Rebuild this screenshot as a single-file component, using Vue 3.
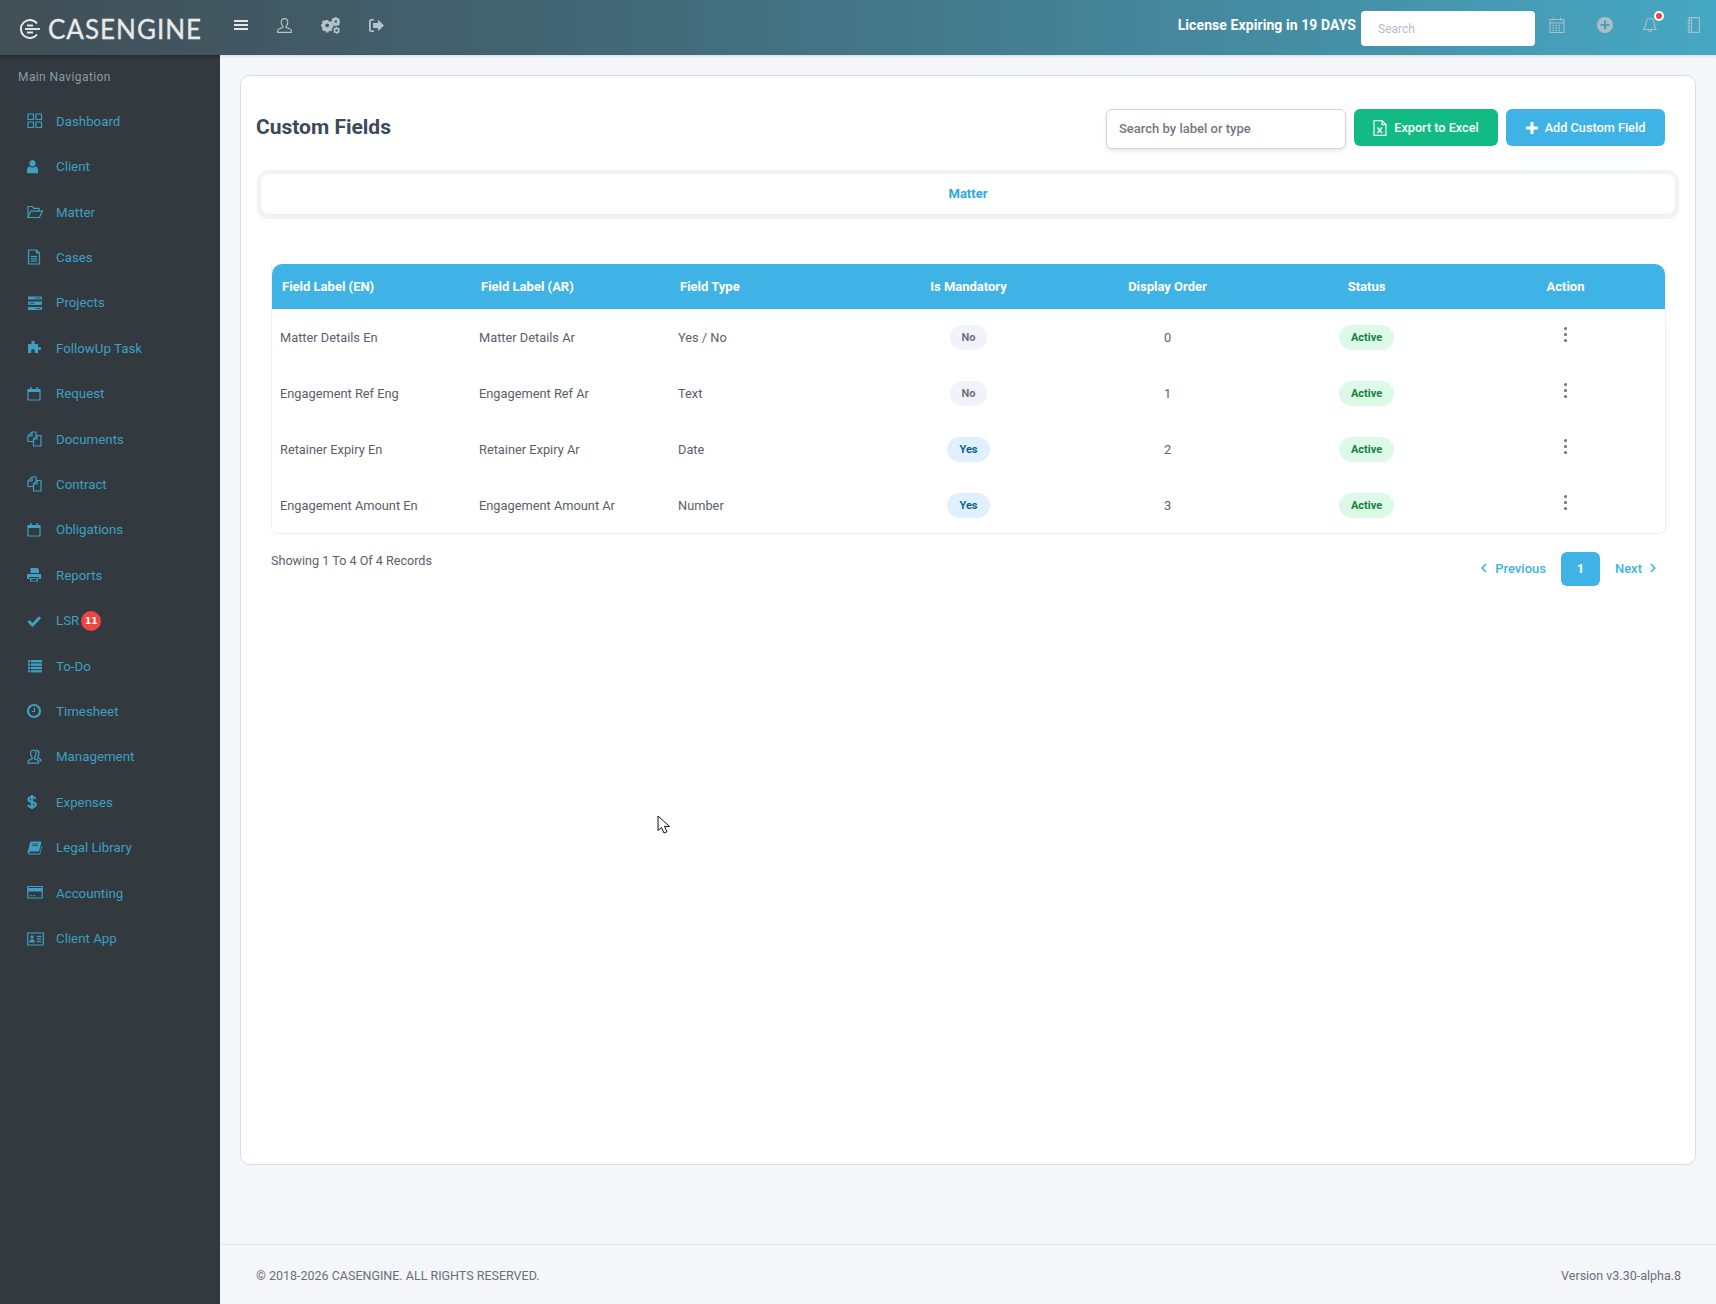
<script setup>
const icons = {
  dashboard: { s: ['M1 1h5.5v5.5H1z', 'M9 1h5.5v5.5H9z', 'M1 9h5.5v5.5H1z', 'M9 9h5.5v5.5H9z'] },
  user: { f: ['M5.5 1C7.3 1 8.6 2.4 8.6 4.2S7.3 7.6 5.5 7.6 2.4 6 2.4 4.2 3.7 1 5.5 1z', 'M2.6 7.6c1.600 1.200 4.200 1.200 5.800 0 1.600.3 2.600 1.400 2.600 3.200v3.400H0v-3.400c0-1.800 1-2.900 2.600-3.200z'] },
  folder: { s: ['M1 13.5V2.5h4.200l1.500 1.800h5.400v2.800', 'M1 13.5h11.400l3-6.400H3.800z'] },
  file: { s: ['M1.5 1h8l3 3v11h-11z', 'M9.5 1v3h3', 'M3.8 7.5h6.400', 'M3.8 9.8h6.400', 'M3.8 12h6.400'] },
  tasks: { f: ['M1 1.5h14v3H1z', 'M1 6.5h14v3.400H1z', 'M1 12h14v3H1z'], k: ['M8.5 2.7h5v.8h-5z', 'M2.5 7.8h5v.8h-5z', 'M8.5 13.2h5v.8h-5z'] },
  puzzle: { f: ['M4.5 1h3v3H11v3.200h3v2.600h-3V13H7.8v-2a1.800 1.800 0 0 0-3.600 0v2H1V4h3.500z'] },
  calendar: { s: ['M1 3.5h12v10.500H1z'], f: ['M1 3h12v3H1z', 'M3 1h1.600v3H3z', 'M9.4 1H11v3H9.4z'] },
  files: { s: ['M6.5 10.5H1V5l4-4h4v3.500', 'M5 1v4H1', 'M6.5 15V8L10 4.5h4V15z', 'M10 4.5V8H6.5'] },
  print: { f: ['M3.5 1h7l1.500 1.700V6H3.500z', 'M0 7h14v5h-2.200V10H2.200v2H0z', 'M3 11h8v3.500H3z'], k: ['M4.2 11.8h5.600v1.900H4.200z'] },
  check: { s3: ['M1.5 8l4 4L13 4.2'] },
  list: { f: ['M1 2h2.200v2.400H1z', 'M4 2h11v2.400H4z', 'M1 5.4h2.200v2.400H1z', 'M4 5.4h11v2.400H4z', 'M1 8.8h2.200v2.400H1z', 'M4 8.8h11v2.400H4z', 'M1 12.2h2.200v2.200H1z', 'M4 12.2h11v2.200H4z'] },
  clock: { s2: ['M7 2a6 6 0 1 0 0 12A6 6 0 0 0 7 2z'], s: ['M7.5 4.5v4H4.8'] },
  people: { s: ['M6.5 1C4.5 1 3.5 2.6 3.5 4.6c0 1.600.7 2.900 1.600 3.800v1.400C3 10.400 1 11 1 12.400v1.800h10.500v-1.800c0-1.400-2-2-4.100-2.600V8.400c1-.9 1.600-2.200 1.600-3.800C9 2.600 8 1 6.500 1z', 'M9 1.2c1.800.1 3 1.500 3 3.400 0 1.300-.4 2.400-1.200 3.300v1.300c1.800.5 3.200 1 3.200 2.400v.4h-2'] },
  dollar: { s2: ['M8.5 4.8C8 3.6 6.8 3 5 3 3 3 1.5 3.9 1.5 5.5 1.5 9 8.7 7 8.7 10.500 8.700 12.100 7 13 5 13c-2 0-3.400-.8-3.900-2.200', 'M5 1v14'] },
  book: { f: ['M3.5 1.5h11L12 11.600H2.800c-.9 0-1 1.800 0 1.800h9.800l1.800-7.400.7.500-2 8H2.500C.9 14.500.4 13 .7 11.500z'], k: ['M5.5 3.6h6v.7h-6z', 'M5 5.4h6v.7H5z'] },
  card: { s: ['M.8 1.5h14.400v11.500H.8z'], f: ['M.8 3h14.400v3.500H.8z', 'M2.5 10.300h2.500v.9H2.500z', 'M5.800 10.300h2.500v.9H5.800z'] },
  idcard: { s: ['M.7 2h15.600v12H.7z', 'M9.800 5.500h4.500', 'M9.800 8h4.500', 'M9.800 10.500h4.500'], f: ['M5 4.300a1.500 1.500 0 1 1 0 3.300 1.500 1.500 0 0 1 0-3.300z', 'M2.300 11.500c0-2 1.200-3.200 2.700-3.200s2.700 1.200 2.700 3.200z'] },
}

const navItems = [
  { label: 'Dashboard', icon: 'dashboard' },
  { label: 'Client', icon: 'user' },
  { label: 'Matter', icon: 'folder' },
  { label: 'Cases', icon: 'file' },
  { label: 'Projects', icon: 'tasks' },
  { label: 'FollowUp Task', icon: 'puzzle' },
  { label: 'Request', icon: 'calendar' },
  { label: 'Documents', icon: 'files' },
  { label: 'Contract', icon: 'files' },
  { label: 'Obligations', icon: 'calendar' },
  { label: 'Reports', icon: 'print' },
  { label: 'LSR', icon: 'check', badge: 11 },
  { label: 'To-Do', icon: 'list' },
  { label: 'Timesheet', icon: 'clock' },
  { label: 'Management', icon: 'people' },
  { label: 'Expenses', icon: 'dollar' },
  { label: 'Legal Library', icon: 'book' },
  { label: 'Accounting', icon: 'card' },
  { label: 'Client App', icon: 'idcard' },
]

const columns = ['Field Label (EN)', 'Field Label (AR)', 'Field Type', 'Is Mandatory', 'Display Order', 'Status', 'Action']

const rows = [
  { en: 'Matter Details En', ar: 'Matter Details Ar', type: 'Yes / No', mandatory: 'No', order: 0 },
  { en: 'Engagement Ref Eng', ar: 'Engagement Ref Ar', type: 'Text', mandatory: 'No', order: 1 },
  { en: 'Retainer Expiry En', ar: 'Retainer Expiry Ar', type: 'Date', mandatory: 'Yes', order: 2 },
  { en: 'Engagement Amount En', ar: 'Engagement Amount Ar', type: 'Number', mandatory: 'Yes', order: 3 },
]
</script>

<template>
  <div class="page">
    <header class="topbar">
      <div class="brand">
        <svg class="brand-mark" viewBox="0 0 20 20" width="20" height="20" fill="none" stroke="#e8eaeb" stroke-width="1.900">
          <path d="M17 4.500A9 9 0 1 0 17 15.500" />
          <path d="M7 6.500h6" />
          <path d="M5 10h15" />
          <path d="M7 13.500h6" />
        </svg>
        <span class="brand-name">CASENGINE</span>
      </div>
      <div class="top-left">
        <svg class="top-icon bright" width="14" height="10" viewBox="0 0 14 10" fill="currentColor">
          <path d="M0 0h14v2H0zM0 4h14v2H0zM0 8h14v2H0z" />
        </svg>
        <svg class="top-icon" width="15" height="15" viewBox="0 0 15 15" fill="none" stroke="currentColor" stroke-width="1.100">
          <path d="M7.500.6c-2.100 0-3.300 1.700-3.300 3.700 0 1.700.7 3 1.700 3.900v1.300C3.500 10.300.6 11 .6 12.700v1.700h13.800v-1.700c0-1.700-2.900-2.400-5.300-3.200V8.200c1-.9 1.700-2.200 1.700-3.900C10.800 2.300 9.600.6 7.500.6z" />
        </svg>
        <svg class="top-icon gears" width="19" height="17" viewBox="0 0 19 17" fill="currentColor">
          <path fill-rule="evenodd" d="M5.500 4.200h2.400l.4 1.400 1.300.6 1.300-.7 1.500 1.600-.7 1.200.5 1.300 1.400.4v2.200l-1.400.4-.5 1.300.7 1.200-1.500 1.500-1.300-.7-1.300.6-.4 1.300H5.500l-.4-1.300-1.300-.6-1.300.7L1 14.100l.7-1.200-.5-1.300L0 11.200V9l1.200-.4.5-1.300L1 6.100l1.500-1.600 1.300.7 1.300-.6zM6.700 8a2.100 2.100 0 1 0 0 4.200 2.100 2.100 0 0 0 0-4.200z" transform="scale(.92) translate(0 -1)" />
          <path fill-rule="evenodd" d="M14 0h1.600l.3 1 .9.4.9-.4 1 1.100-.4.8.3.9.4.2v1.600l-.4.2-.3.9.4.8-1 1.100-.9-.4-.9.4-.3.6H14l-.3-.6-.9-.4-.9.4-1-1.100.4-.8-.3-.9-.6-.2V3.800l.6-.2.3-.9-.4-.8 1-1.100.9.4.9-.4zM14.800 3.300a1.300 1.300 0 1 0 0 2.600 1.300 1.300 0 0 0 0-2.600z" />
          <path fill-rule="evenodd" d="M15 10h1.300l.2.8.7.3.8-.3.8.9-.3.7v2l.3.7-.8.9-.8-.3-.7.3-.2.8H15l-.2-.8-.7-.3-.8.3-.8-.9.3-.7v-2l-.3-.7.8-.9.8.3.7-.3zM15.600 12.300a1.200 1.200 0 1 0 0 2.400 1.200 1.200 0 0 0 0-2.400z" />
        </svg>
        <svg class="top-icon" width="15" height="13" viewBox="0 0 15 13" fill="currentColor">
          <path d="M5 0H2.500A2.500 2.500 0 0 0 0 2.500v8A2.500 2.500 0 0 0 2.500 13H5v-1.600H2.800a1 1 0 0 1-1-1V2.600a1 1 0 0 1 1-1H5z" />
          <path d="M9 .7L15 6.500 9 12.300V9H4V4h5z" />
        </svg>
      </div>
      <div class="top-right">
        <span class="license">License Expiring in 19 DAYS</span>
        <input class="top-search" type="text" placeholder="Search" />
        <svg class="top-icon" width="16" height="16" viewBox="0 0 16 16" fill="none" stroke="currentColor" stroke-width="1.100">
          <path d="M1 2.500h14v13H1zM1 6h14M4.500.5v3M11.500.5v3" />
          <path stroke-width="1.500" stroke-dasharray="1.500 1.500" d="M3.500 8.500h9M3.500 11h9M3.500 13.500h9" />
        </svg>
        <svg class="top-icon plus" width="16" height="16" viewBox="0 0 16 16" fill="currentColor">
          <path fill-rule="evenodd" d="M8 0a8 8 0 1 1 0 16A8 8 0 0 1 8 0zM7 3.500V7H3.500v2H7v3.500h2V9h3.500V7H9V3.500z" />
        </svg>
        <span class="bell">
          <svg class="top-icon" width="14" height="16" viewBox="0 0 14 16" fill="none" stroke="currentColor" stroke-width="1.100">
            <path d="M7 1.500c-2.500 0-4 1.800-4 4.200 0 3.500-.8 5-2.300 6.800h12.600C11.800 10.700 11 9.200 11 5.700c0-2.400-1.500-4.200-4-4.200zM5.500 13c0 1.800 3 1.800 3 0" />
          </svg>
          <i class="bell-dot"></i>
        </span>
        <svg class="top-icon" width="13" height="16" viewBox="0 0 13 16" fill="none" stroke="currentColor" stroke-width="1.100">
          <path d="M2 .6h10.400v14.800H2zM4.500.6v14.800M.4 3.500h2.800M.4 6.500h2.800M.4 9.500h2.800M.4 12.500h2.800" />
        </svg>
      </div>
    </header>

    <div class="layout">
      <aside class="sidebar">
        <div class="nav-title">Main Navigation</div>
        <nav class="nav">
          <a v-for="item in navItems" :key="item.label" class="nav-item">
            <span class="nav-icon">
              <svg width="17" height="16" viewBox="0 0 17 16">
                <path v-for="d in icons[item.icon].f" :key="d" :d="d" fill="#3f9fc1" />
                <path v-for="d in icons[item.icon].k" :key="d" :d="d" fill="#323a40" />
                <path v-for="d in icons[item.icon].s" :key="d" :d="d" fill="none" stroke="#3f9fc1" stroke-width="1.200" />
                <path v-for="d in icons[item.icon].s2" :key="d" :d="d" fill="none" stroke="#3f9fc1" stroke-width="2.200" />
                <path v-for="d in icons[item.icon].s3" :key="d" :d="d" fill="none" stroke="#3f9fc1" stroke-width="3" />
              </svg>
            </span>
            <span>{{ item.label }}</span>
            <span v-if="item.badge" class="nav-badge">{{ item.badge }}</span>
          </a>
        </nav>
      </aside>

      <main class="main">
        <div class="content">
          <section class="card">
            <div class="card-head">
              <h1>Custom Fields</h1>
              <div class="tools">
                <input class="tool-search" type="text" placeholder="Search by label or type" />
                <button class="btn green">
                  <svg width="14" height="16" viewBox="0 0 14 16" fill="none" stroke="#fff" stroke-width="1.100">
                    <path d="M1 .6h8l4 4v10.800H1zM9 .6v4h4" />
                    <path stroke-width="1.400" d="M4.500 7.500l4.500 5.500M9 7.500l-4.500 5.500" />
                  </svg>
                  Export to Excel
                </button>
                <button class="btn blue">
                  <svg width="12" height="12" viewBox="0 0 12 12" fill="#fff">
                    <path d="M4.500 0h3v4.500H12v3H7.500V12h-3V7.500H0v-3h4.500z" />
                  </svg>
                  Add Custom Field
                </button>
              </div>
            </div>

            <div class="tabs"><a class="tab">Matter</a></div>

            <div class="table-wrap">
              <table>
                <thead>
                  <tr>
                    <th v-for="(col, i) in columns" :key="col" :class="{ center: i > 2 }">{{ col }}</th>
                  </tr>
                </thead>
                <tbody>
                  <tr v-for="row in rows" :key="row.en">
                    <td>{{ row.en }}</td>
                    <td>{{ row.ar }}</td>
                    <td>{{ row.type }}</td>
                    <td class="center">
                      <span class="pill" :class="row.mandatory === 'Yes' ? 'pill-yes' : 'pill-no'">{{ row.mandatory }}</span>
                    </td>
                    <td class="center">{{ row.order }}</td>
                    <td class="center"><span class="pill pill-active">Active</span></td>
                    <td class="center">
                      <span class="dots"><i></i><i></i><i></i></span>
                    </td>
                  </tr>
                </tbody>
              </table>
            </div>

            <div class="table-foot">
              <span class="records">Showing 1 To 4 Of 4 Records</span>
              <div class="pager">
                <a class="page-link">
                  <svg width="6" height="10" viewBox="0 0 6 10" fill="none" stroke="currentColor" stroke-width="1.600"><path d="M5 1L1.200 5 5 9" /></svg>
                  Previous
                </a>
                <a class="page-num">1</a>
                <a class="page-link">
                  Next
                  <svg width="6" height="10" viewBox="0 0 6 10" fill="none" stroke="currentColor" stroke-width="1.600"><path d="M1 1l3.800 4L1 9" /></svg>
                </a>
              </div>
            </div>
          </section>
        </div>

        <footer class="footer">
          <span>© 2018-2026 CASENGINE. ALL RIGHTS RESERVED.</span>
          <span>Version v3.30-alpha.8</span>
        </footer>
      </main>
    </div>

    <svg class="cursor" width="14" height="20" viewBox="0 0 14 20">
      <path d="M1 1v14.500l3.500-3 2.500 5.500 3-1.300-2.500-5.300h5z" fill="#fff" stroke="#111" stroke-width="1" />
    </svg>
  </div>
</template>

<style scoped>
.page {
  height: 1304px;
  display: flex;
  flex-direction: column;
  position: relative;
  overflow: hidden;
  font-family: Roboto, "Noto Sans", sans-serif;
  font-size: 13px;
  color: #5b6068;
}

.topbar {
  height: 55px;
  flex: none;
  display: flex;
  align-items: center;
  background: linear-gradient(90deg, #414e55 0%, #426370 30%, #458da3 75%, #46a8c4 100%);
  box-shadow: 0 1px 3px rgba(0, 0, 0, 0.12);
  position: relative;
  z-index: 2;
}

.brand {
  width: 220px;
  flex: none;
  display: flex;
  align-items: center;
  gap: 8px;
  padding: 3px 0 0 20px;
  box-sizing: border-box;
}

.brand-name {
  font-family: Lato, sans-serif;
  font-size: 26px;
  letter-spacing: 1px;
  -webkit-text-stroke: 0.3px #e8eaeb;
  color: #e8eaeb;
  line-height: 1;
}

.top-left {
  display: flex;
  align-items: center;
  gap: 29px;
  padding-left: 14px;
  margin-top: -5px;
}

.top-icon {
  color: #a8bfc9;
  display: block;
  flex: none;
}

.top-left .top-icon {
  color: #b5c4ca;
}

.top-left .top-icon.bright {
  color: #e2e8ea;
}

.top-right {
  margin-left: auto;
  display: flex;
  align-items: center;
  padding-right: 16px;
}

.top-right > .top-icon,
.bell {
  margin-top: -5px;
}

.license {
  font-weight: 700;
  font-size: 14px;
  letter-spacing: 0.08px;
  color: #fff;
  margin-right: 5px;
  margin-top: -5px;
}

.top-search {
  width: 174px;
  height: 35px;
  box-sizing: border-box;
  border: none;
  border-radius: 4px;
  background: #fff;
  padding: 0 17px;
  margin: 2px 14px 0 0;
  font: inherit;
  font-size: 12px;
  outline: none;
}

.top-search::placeholder {
  color: #b6bccb;
}

.plus {
  margin-left: 32px;
}

.bell {
  margin-left: 30px;
  margin-right: 30px;
  position: relative;
  display: block;
}

.bell-dot {
  position: absolute;
  top: -6px;
  right: -7px;
  width: 6px;
  height: 6px;
  border-radius: 50%;
  background: #ef4444;
  border: 2px solid #fff;
}

.layout {
  flex: 1;
  display: flex;
  min-height: 0;
}

.sidebar {
  width: 220px;
  flex: none;
  background: #323a40;
  box-shadow: inset 0 4px 4px -3px rgba(0, 0, 0, 0.25);
}

.nav-title {
  padding: 14px 0 0 18px;
  font-size: 12px;
  line-height: 16px;
  letter-spacing: 0.4px;
  color: #8d9aa5;
}

.nav {
  margin-top: 13.500px;
}

.nav-item {
  height: 45.420px;
  display: flex;
  align-items: center;
  padding-left: 27px;
  font-size: 13.300px;
  color: #3f9fc1;
}

.nav-icon {
  width: 29px;
  flex: none;
  display: flex;
  align-items: center;
}

.nav-badge {
  margin-left: 2px;
  width: 20px;
  height: 20px;
  border-radius: 50%;
  background: #ef4444;
  color: #fff;
  font-family: "DejaVu Sans", sans-serif;
  font-size: 9px;
  font-weight: 700;
  line-height: 20px;
  text-align: center;
}

.main {
  flex: 1;
  min-width: 0;
  display: flex;
  flex-direction: column;
  background: #f4f6fa;
}

.content {
  flex: 1;
  padding: 20px 20px 0;
}

.card {
  height: 1090px;
  box-sizing: border-box;
  background: #fff;
  border: 1px solid #d5dfe8;
  border-radius: 10px;
  padding: 33px 16px 0 15px;
}

.card-head {
  display: flex;
  justify-content: space-between;
  align-items: flex-start;
  padding-right: 14px;
}

.card-head h1 {
  margin: 0;
  font-size: 21px;
  font-weight: 700;
  line-height: 37px;
  color: #3b4a5a;
}

.tools {
  display: flex;
  gap: 8px;
}

.tool-search {
  width: 240px;
  height: 40px;
  box-sizing: border-box;
  border: 1px solid #d3d5dc;
  border-radius: 6px;
  box-shadow: 0 2px 4px rgba(0, 0, 0, 0.1);
  padding: 0 12px 2px;
  font: inherit;
  font-weight: 500;
  outline: none;
}

.tool-search::placeholder {
  color: #74787f;
}

.btn {
  height: 37px;
  border: none;
  border-radius: 6px;
  display: flex;
  align-items: center;
  justify-content: center;
  gap: 7px;
  color: #fff;
  font: inherit;
  font-size: 12.700px;
  font-weight: 500;
}

.btn.green {
  width: 144px;
  background: #12bb83;
}

.btn.blue {
  width: 159px;
  background: #40b3e6;
}

.tabs {
  margin: 21px 0 0 1px;
  height: 49px;
  box-sizing: border-box;
  border: 4px solid #eff2f7;
  border-radius: 12px;
  box-shadow: inset 0 -1px 0 #e9ebf0;
  padding-bottom: 2px;
  display: flex;
  align-items: center;
  justify-content: center;
}

.tab {
  color: #29a9e0;
  font-weight: 700;
}

.table-wrap {
  margin: 45px 13px 0 15px;
}

table {
  width: 100%;
  border-collapse: separate;
  border-spacing: 0;
  table-layout: fixed;
  border-bottom: 1px solid #eceef1;
  border-left: 1px solid #f0f1f4;
  border-right: 1px solid #f0f1f4;
  border-bottom-left-radius: 6px;
  border-bottom-right-radius: 6px;
}

th {
  height: 45px;
  padding: 0 10px;
  background: #40b3e6;
  color: #fff;
  font-weight: 700;
  text-align: left;
}

th:first-child {
  border-top-left-radius: 10px;
}

th:last-child {
  border-top-right-radius: 10px;
}

td {
  height: 56px;
  padding: 0 8px;
  font-size: 12.800px;
}

.center {
  text-align: center;
}

.pill {
  display: inline-block;
  height: 25px;
  line-height: 25px;
  border-radius: 12.500px;
  padding: 0 12px;
  font-size: 11px;
  font-weight: 700;
  vertical-align: middle;
}

.pill-no {
  background: #f0f3f9;
  color: #6b7280;
}

.pill-yes {
  background: #e0f0fe;
  color: #075f97;
}

.pill-active {
  background: #dcfae7;
  color: #15803d;
}

.dots {
  display: inline-flex;
  flex-direction: column;
  gap: 2.500px;
  vertical-align: middle;
  margin-top: -7px;
}

.dots i {
  width: 3.500px;
  height: 3.500px;
  border-radius: 50%;
  background: #6a6f75;
}

.table-foot {
  display: flex;
  justify-content: space-between;
  align-items: flex-start;
  margin: 18px 14px 0 15px;
}

.records {
  font-size: 12.600px;
  line-height: 18px;
}

.pager {
  display: flex;
  align-items: center;
  gap: 15px;
}

.page-link {
  display: flex;
  align-items: center;
  gap: 8px;
  margin-top: -2px;
  color: #40b3e6;
  font-weight: 500;
}

.page-link:last-child {
  padding-right: 9px;
}

.page-num {
  width: 39px;
  height: 34px;
  border-radius: 6px;
  background: #40b3e6;
  color: #fff;
  font-weight: 700;
  line-height: 34px;
  text-align: center;
}

.footer {
  height: 60px;
  flex: none;
  box-sizing: border-box;
  border-top: 1px solid #e3e6ec;
  display: flex;
  align-items: center;
  justify-content: space-between;
  padding: 2px 35px 0 36px;
  font-size: 12.500px;
  color: #6a6f78;
}

.cursor {
  position: absolute;
  left: 657px;
  top: 815px;
}
</style>

<style>
html,
body {
  margin: 0;
  background: #f4f6fa;
}
</style>
